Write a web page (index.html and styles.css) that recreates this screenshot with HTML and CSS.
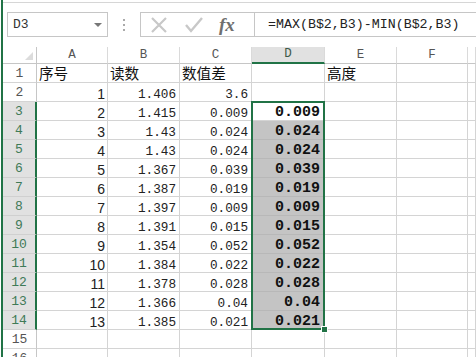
FILE: index.html
```html
<!DOCTYPE html>
<html lang="zh-CN">
<head>
    <meta charset="UTF-8">
    <title>Excel - 数值差</title>
    <link rel="stylesheet" href="styles.css">
</head>
<body>
    <div class="app">
        <div class="formula-bar">
            <div class="name-box">
                <span>D3</span>
                <span class="drop"></span>
            </div>
            <div class="grip"><i></i><i></i><i></i></div>
            <div class="fx-tools">
                <svg class="tool" width="18" height="18" viewBox="0 0 18 18">
                    <path d="M2 2 L16 16 M16 2 L2 16" stroke="#c8c8c8" stroke-width="2.2" fill="none"/>
                </svg>
                <svg class="tool" width="20" height="18" viewBox="0 0 20 18">
                    <path d="M2 9 L7 15 L18 2" stroke="#c8c8c8" stroke-width="2.4" fill="none"/>
                </svg>
                <span class="fx">fx</span>
            </div>
            <div class="formula">=MAX(B$2,B3)-MIN(B$2,B3)</div>
        </div>

        <div class="sheet" id="sheet">
            <div class="selection"><span class="handle"></span></div>
        </div>
    </div>

    <script>
        const cols = ['', 'A', 'B', 'C', 'D', 'E', 'F', ''];
        const data = [
            ['序号', '读数', '数值差', '', '高度'],
            ['1', '1.406', '3.6', ''],
            ['2', '1.415', '0.009', '0.009'],
            ['3', '1.43', '0.024', '0.024'],
            ['4', '1.43', '0.024', '0.024'],
            ['5', '1.367', '0.039', '0.039'],
            ['6', '1.387', '0.019', '0.019'],
            ['7', '1.397', '0.009', '0.009'],
            ['8', '1.391', '0.015', '0.015'],
            ['9', '1.354', '0.052', '0.052'],
            ['10', '1.384', '0.022', '0.022'],
            ['11', '1.378', '0.028', '0.028'],
            ['12', '1.366', '0.04', '0.04'],
            ['13', '1.385', '0.021', '0.021'],
            [], []
        ];
        const sheet = document.getElementById('sheet');

        function cell(cls, text) {
            const el = document.createElement('div');
            el.className = cls;
            el.textContent = text || '';
            sheet.appendChild(el);
        }

        // column headers
        cols.forEach((c, i) => {
            if (i === 0) cell('corner');
            else cell('col-head' + (c === 'D' ? ' active' : ''), c);
        });

        // rows
        data.forEach((row, r) => {
            const n = r + 1;
            const sel = n >= 3 && n <= 14;
            cell('row-head' + (sel ? ' active' : ''), n);
            for (let c = 0; c < 7; c++) {
                const v = row[c] || '';
                let cls = 'c';
                if (n === 1) cls += ' label';
                else if (c === 0) cls += ' num-a';
                else if (c === 1 || c === 2) cls += ' num';
                else if (c === 3) cls += ' num-d';
                if (c === 3 && sel && n > 3) cls += ' filled';
                cell(cls, v);
            }
        });
    </script>
</body>
</html>
```

FILE: styles.css
```css
* {
    margin: 0;
    padding: 0;
    box-sizing: border-box;
}
body {
    font-family: "Liberation Mono", monospace;
    background-color: #fff;
    overflow: hidden;
    height: 357px;
}
.app {
    margin-left: 1px;
    border-left: 2px solid #217346;
    height: 357px;
    overflow: hidden;
}
.formula-bar {
    height: 47px;
    border-top: 1px solid #d6d6d6;
    margin-top: 2px;
    display: flex;
    align-items: flex-start;
    padding-top: 9px;
    padding-left: 4px;
    margin-bottom: -2px;
}
.name-box {
    width: 101px;
    height: 25px;
    border: 1px solid #c6c6c6;
    display: flex;
    align-items: center;
    justify-content: space-between;
    padding: 0 5px 0 5px;
    font-size: 13px;
    color: #333;
}
.drop {
    width: 0;
    height: 0;
    border-left: 4px solid transparent;
    border-right: 4px solid transparent;
    border-top: 4px solid #777;
}
.grip {
    width: 32px;
    height: 25px;
    display: flex;
    flex-direction: column;
    align-items: center;
    justify-content: center;
    gap: 3px;
}
.grip i {
    width: 2px;
    height: 2px;
    background-color: #aaa;
}
.fx-tools {
    width: 114px;
    height: 25px;
    border: 1px solid #c6c6c6;
    border-right: none;
    display: flex;
    align-items: center;
    padding-left: 9px;
    gap: 16px;
}
.fx {
    font-family: "Liberation Serif", serif;
    font-style: italic;
    font-weight: bold;
    font-size: 19px;
    color: #6f6f6f;
    margin-left: -1px;
}
.formula {
    flex: 1;
    height: 25px;
    border: 1px solid #c6c6c6;
    border-right: none;
    font-size: 13.3px;
    color: #222;
    padding-left: 13px;
    line-height: 23px;
    white-space: nowrap;
}
.sheet {
    position: relative;
    display: grid;
    grid-template-columns: 34px 71px 72px 72px 73px 72px 71px 1fr;
    grid-template-rows: 17px repeat(16, 19px);
}
.corner,
.col-head,
.row-head,
.c {
    border-right: 1px solid #d4d4d4;
    border-bottom: 1px solid #d4d4d4;
    white-space: nowrap;
}
.corner {
    position: relative;
    border-right-color: #c6c6c6;
    border-bottom-color: #c6c6c6;
}
.corner::after {
    content: "";
    position: absolute;
    right: 3px;
    bottom: 3px;
    border-left: 8px solid transparent;
    border-bottom: 8px solid #dcdcdc;
}
.col-head {
    text-align: center;
    font-size: 12.5px;
    line-height: 16px;
    color: #555;
    border-bottom-color: #c6c6c6;
    border-right-color: #dadada;
}
.col-head.active {
    background-color: #e1e1e1;
    border-bottom: 2px solid #217346;
    color: #3c5a48;
    line-height: 15px;
}
.row-head {
    text-align: center;
    font-size: 13px;
    line-height: 20px;
    color: #555;
    border-right-color: #c6c6c6;
}
.row-head.active {
    background-color: #e1e1e1;
    border-right: 2px solid #217346;
    border-bottom-color: #d0d0d0;
    color: #3f7a57;
}
.c {
    display: flex;
    align-items: flex-end;
    justify-content: flex-end;
    padding-right: 3px;
    font-size: 12.7px;
    line-height: 13px;
    color: #222;
}
.c.label {
    justify-content: flex-start;
    padding-left: 2px;
    font-family: "Noto Sans CJK SC", sans-serif;
    font-size: 14.6px;
    line-height: 18px;
    color: #111;
}
.c.num-a {
    font-family: "Liberation Sans", sans-serif;
    font-size: 14px;
    line-height: 14px;
    padding-right: 2px;
}
.c.num-d {
    font-weight: bold;
    font-size: 15px;
    line-height: 14px;
    padding-right: 4px;
    color: #111;
}
.c.filled {
    background-color: #c4c4c4;
    border-bottom-color: #b8b8b8;
    border-right-color: #c4c4c4;
}
.selection {
    position: absolute;
    left: 248px;
    top: 54px;
    width: 74px;
    height: 229px;
    border: 2px solid #217346;
    pointer-events: none;
}
.handle {
    position: absolute;
    right: -5px;
    bottom: -5px;
    width: 7px;
    height: 7px;
    background-color: #217346;
    border: 1px solid #fff;
}
```
